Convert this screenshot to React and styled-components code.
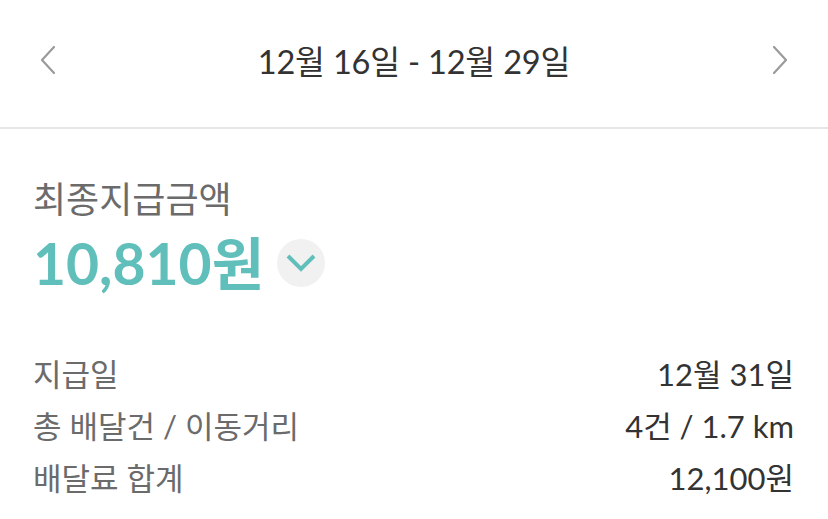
import React from "react";
import styled, { createGlobalStyle } from "styled-components";

const GlobalStyle = createGlobalStyle`
  html, body {
    margin: 0;
    padding: 0;
    background: #fff;
  }
  body {
    font-family: Lato, "Noto Sans CJK KR", sans-serif;
  }
`;

const Page = styled.div`
  width: 828px;
  background: #fff;
`;

const Header = styled.div`
  height: 119px;
  padding: 0 40px 8px 40px;
  display: flex;
  align-items: center;
  justify-content: space-between;
  border-bottom: 2px solid #e6e6e6;
`;

const NavButton = styled.button`
  width: 16px;
  height: 30px;
  padding: 0;
  border: 0;
  background: none;
  display: flex;
  align-items: center;
  justify-content: center;
  cursor: pointer;
`;

const Period = styled.div`
  font-size: 32.5px;
  color: #333;
  letter-spacing: -0.2px;
`;

const Summary = styled.div`
  padding: 49px 34px 0 33px;
`;

const Caption = styled.div`
  font-size: 36px;
  line-height: 42px;
  color: #6b6b6b;
`;

const AmountRow = styled.div`
  margin-top: 11px;
  height: 64px;
  display: flex;
  align-items: center;
  gap: 13px;
`;

const Amount = styled.div`
  font-size: 57px;
  font-weight: 700;
  color: #60bfbb;
  line-height: 64px;
`;

const ToggleButton = styled.button`
  width: 48px;
  height: 48px;
  border-radius: 50%;
  border: 0;
  padding: 0;
  background: #f1f1f1;
  display: flex;
  align-items: center;
  justify-content: center;
  cursor: pointer;
`;

const Details = styled.div`
  margin-top: 51px;
`;

const DetailRow = styled.div`
  display: flex;
  justify-content: space-between;
  align-items: center;
  height: 52px;
  font-size: 31px;
`;

const Label = styled.span`
  color: #6b6b6b;
`;

const Value = styled.span`
  color: #333;
`;

const Chevron = ({ dir }) => (
  <svg width="16" height="30" viewBox="0 0 16 30" fill="none">
    <path
      d={dir === "left" ? "M14 2 L2 15 L14 28" : "M2 2 L14 15 L2 28"}
      stroke="#9a9a9a"
      strokeWidth="2.2"
      strokeLinecap="round"
      strokeLinejoin="round"
    />
  </svg>
);

const details = [
  { label: "지급일", value: "12월 31일" },
  { label: "총 배달건 / 이동거리", value: "4건 / 1.7 km" },
  { label: "배달료 합계", value: "12,100원" },
];

export default function App() {
  return (
    <Page>
      <GlobalStyle />
      <Header>
        <NavButton aria-label="이전">
          <Chevron dir="left" />
        </NavButton>
        <Period>12월 16일 - 12월 29일</Period>
        <NavButton aria-label="다음">
          <Chevron dir="right" />
        </NavButton>
      </Header>
      <Summary>
        <Caption>최종지급금액</Caption>
        <AmountRow>
          <Amount>10,810원</Amount>
          <ToggleButton aria-label="펼치기">
            <svg width="32" height="20" viewBox="0 0 32 20" fill="none">
              <path
                d="M3 3 L16 16 L29 3"
                stroke="#60bfbb"
                strokeWidth="4"
                strokeLinejoin="miter"
              />
            </svg>
          </ToggleButton>
        </AmountRow>
        <Details>
          {details.map((d) => (
            <DetailRow key={d.label}>
              <Label>{d.label}</Label>
              <Value>{d.value}</Value>
            </DetailRow>
          ))}
        </Details>
      </Summary>
    </Page>
  );
}
